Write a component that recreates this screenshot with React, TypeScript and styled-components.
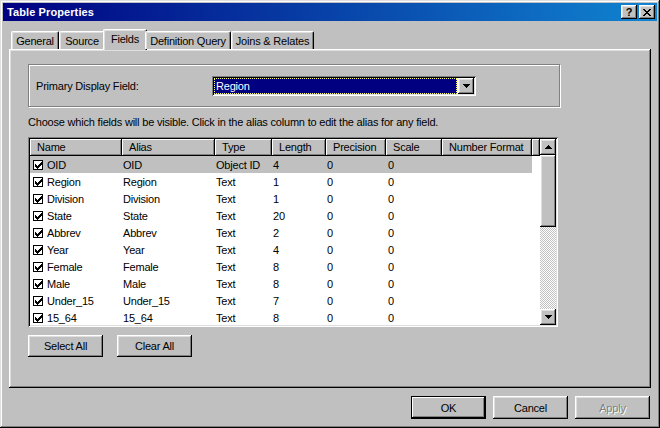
import React from "react";
import styled, { createGlobalStyle, css } from "styled-components";

const Global = createGlobalStyle`
  html, body { margin: 0; padding: 0; background: #c0c0c0; }
  body {
    font-family: "Liberation Sans", Arial, sans-serif;
    font-size: 11px;
    letter-spacing: -0.2px;
    color: #000;
  }
  * { box-sizing: border-box; }
`;

const raised = css`
  box-shadow: inset -1px -1px #000, inset 1px 1px #fff, inset -2px -2px #808080,
    inset 2px 2px #dfdfdf;
`;

const sunken = css`
  box-shadow: inset 1px 1px #808080, inset -1px -1px #fff, inset 2px 2px #000,
    inset -2px -2px #dfdfdf;
`;

const Window = styled.div`
  width: 660px;
  height: 428px;
  background: #c0c0c0;
  padding: 3px;
  display: flex;
  flex-direction: column;
  box-shadow: inset -1px -1px #000, inset 1px 1px #dfdfdf, inset -2px -2px #808080,
    inset 2px 2px #fff;
`;

const TitleBar = styled.div`
  height: 18px;
  flex: none;
  display: flex;
  align-items: center;
  padding: 0 2px 0 4px;
  background: linear-gradient(to right, #000080, #1084d0);
`;

const Title = styled.div`
  flex: 1;
  color: #fff;
  font-weight: bold;
  font-size: 11px;
  letter-spacing: 0.1px;
`;

const CaptionButton = styled.div`
  width: 16px;
  height: 14px;
  background: #c0c0c0;
  ${raised};
  display: flex;
  align-items: center;
  justify-content: center;
  font-weight: bold;
  font-size: 11px;
  line-height: 14px;
  letter-spacing: 0;
  & + & {
    margin-left: 2px;
  }
`;

const Body = styled.div`
  flex: 1;
  display: flex;
  flex-direction: column;
  padding: 8px 6px 6px 6px;
`;

const TabRow = styled.div`
  height: 20px;
  flex: none;
  display: flex;
  align-items: flex-end;
  padding-left: 2px;
  position: relative;
  z-index: 1;
`;

const Tab = styled.div<{ $active?: boolean; $w: number }>`
  width: ${(p) => p.$w}px;
  height: ${(p) => (p.$active ? 21 : 18)}px;
  margin-bottom: ${(p) => (p.$active ? -1 : 0)}px;
  margin-left: ${(p) => (p.$active ? -2 : 0)}px;
  margin-right: ${(p) => (p.$active ? -2 : 0)}px;
  background: #c0c0c0;
  border-top: 1px solid #fff;
  border-left: 1px solid #fff;
  border-right: 1px solid #000;
  border-radius: 2px 2px 0 0;
  box-shadow: inset -1px 0 #808080, inset 1px 1px #dfdfdf;
  display: flex;
  justify-content: center;
  padding-top: 3px;
  white-space: nowrap;
`;

const Panel = styled.div`
  flex: 1;
  ${raised};
  padding: 15px 19px 0 19px;
  display: flex;
  flex-direction: column;
`;

const GroupBox = styled.div`
  width: 532px;
  height: 43px;
  border: 1px solid #808080;
  box-shadow: inset 1px 1px #fff, 1px 1px #fff;
  display: grid;
  grid-template-columns: 176px 264px;
  align-items: center;
  padding: 1px 0 0 7px;
`;

const Combo = styled.div`
  height: 20px;
  ${sunken};
  background: #fff;
  padding: 2px;
  display: flex;
`;

const ComboValue = styled.div`
  flex: 1;
  background: #000080;
  color: #fff;
  outline: 1px dotted #ffff80;
  outline-offset: -1px;
  padding-left: 2px;
  line-height: 16px;
  margin-right: 1px;
`;

const ComboButton = styled.div`
  width: 16px;
  height: 16px;
  background: #c0c0c0;
  ${raised};
  display: flex;
  align-items: center;
  justify-content: center;
`;

const Hint = styled.div`
  margin-top: 8px;
  height: 14px;
  line-height: 14px;
  white-space: nowrap;
`;

const TableFrame = styled.div`
  margin-top: 8px;
  width: 530px;
  height: 190px;
  ${sunken};
  padding: 2px;
  display: flex;
  background: #fff;
`;

const ListArea = styled.div`
  width: 510px;
  height: 186px;
  overflow: hidden;
  background: #fff;
`;

const COLS = "92px 93px 57px 54px 60px 56px 90px 8px";

const HeaderRow = styled.div`
  display: grid;
  grid-template-columns: ${COLS};
  height: 17px;
`;

const HeaderCell = styled.div`
  background: #c0c0c0;
  box-shadow: inset -1px -1px #000, inset 1px 1px #fff, inset -2px -2px #808080;
  padding-left: 7px;
  line-height: 16px;
  white-space: nowrap;
  overflow: hidden;
`;

const Row = styled.div<{ $selected?: boolean }>`
  display: grid;
  grid-template-columns: ${COLS};
  height: 17px;
  line-height: 18px;
  & > div:not(:last-child) {
    background: ${(p) => (p.$selected ? "#c0c0c0" : "#fff")};
  }
`;

const Cell = styled.div<{ $pad?: number }>`
  padding-left: ${(p) => p.$pad ?? 1}px;
  white-space: nowrap;
  overflow: hidden;
`;

const NameCell = styled.div`
  display: flex;
  align-items: center;
  gap: 4px;
  padding-left: 3px;
  white-space: nowrap;
`;

const CheckBox = styled.div`
  width: 10px;
  height: 10px;
  border: 1px solid #000;
  background: #fff;
  flex: none;
  display: flex;
`;

const ScrollBar = styled.div`
  width: 16px;
  height: 186px;
  display: flex;
  flex-direction: column;
`;

const ScrollButton = styled.div`
  width: 16px;
  height: 16px;
  flex: none;
  background: #c0c0c0;
  ${raised};
  display: flex;
  align-items: center;
  justify-content: center;
`;

const Thumb = styled.div`
  height: 72px;
  flex: none;
  background: #c0c0c0;
  ${raised};
`;

const Track = styled.div`
  flex: 1;
  background-image: repeating-conic-gradient(#c0c0c0 0% 25%, #fff 0% 50%);
  background-size: 2px 2px;
`;

const ButtonRow = styled.div<{ $end?: boolean }>`
  display: flex;
  gap: ${(p) => (p.$end ? 7 : 14)}px;
  justify-content: ${(p) => (p.$end ? "flex-end" : "flex-start")};
  margin-top: 8px;
  padding-right: ${(p) => (p.$end ? 1 : 0)}px;
`;

const Button = styled.div<{ $default?: boolean; $disabled?: boolean; $h?: number }>`
  width: 75px;
  height: ${(p) => p.$h ?? 23}px;
  background: #c0c0c0;
  display: flex;
  align-items: center;
  justify-content: center;
  ${(p) =>
    p.$default
      ? css`
          border: 1px solid #000;
          box-shadow: inset -1px -1px #000, inset 1px 1px #fff, inset -2px -2px #808080;
        `
      : raised};
  ${(p) =>
    p.$disabled &&
    css`
      color: #808080;
      text-shadow: 1px 1px #fff;
    `}
`;

const CHECK = [
  [6, 0], [5, 1], [6, 1], [0, 2], [4, 2], [5, 2], [6, 2],
  [0, 3], [1, 3], [3, 3], [4, 3], [5, 3],
  [0, 4], [1, 4], [2, 4], [3, 4], [4, 4],
  [1, 5], [2, 5], [3, 5], [2, 6],
];

const CheckMark = () => (
  <svg width="8" height="8" viewBox="0 0 8 8" shapeRendering="crispEdges">
    {CHECK.map(([x, y]) => (
      <rect key={`${x}-${y}`} x={x + 1} y={y + 1} width="1" height="1" fill="#000" />
    ))}
  </svg>
);

const ArrowIcon = ({ down }: { down?: boolean }) => (
  <svg width="7" height="4" viewBox="0 0 7 4" shapeRendering="crispEdges">
    {down ? (
      <path d="M0 0h7v1H0zM1 1h5v1H1zM2 2h3v1H2zM3 3h1v1H3z" fill="#000" />
    ) : (
      <path d="M3 0h1v1H3zM2 1h3v1H2zM1 2h5v1H1zM0 3h7v1H0z" fill="#000" />
    )}
  </svg>
);

const CloseIcon = () => (
  <svg width="8" height="7" viewBox="0 0 8 7" shapeRendering="crispEdges">
    <path
      d="M0 0h2v1H0zM6 0h2v1H6zM1 1h2v1H1zM5 1h2v1H5zM2 2h4v1H2zM3 3h2v1H3zM2 4h4v1H2zM1 5h2v1H1zM5 5h2v1H5zM0 6h2v1H0zM6 6h2v1H6z"
      fill="#000"
    />
  </svg>
);

const tabs = [
  { label: "General", w: 48 },
  { label: "Source", w: 46 },
  { label: "Fields", w: 44, active: true },
  { label: "Definition Query", w: 86 },
  { label: "Joins & Relates", w: 83 },
];

const fields: [string, string, string, string][] = [
  ["OID", "Object ID", "4", "0"],
  ["Region", "Text", "1", "0"],
  ["Division", "Text", "1", "0"],
  ["State", "Text", "20", "0"],
  ["Abbrev", "Text", "2", "0"],
  ["Year", "Text", "4", "0"],
  ["Female", "Text", "8", "0"],
  ["Male", "Text", "8", "0"],
  ["Under_15", "Text", "7", "0"],
  ["15_64", "Text", "8", "0"],
];

const headers = ["Name", "Alias", "Type", "Length", "Precision", "Scale", "Number Format", ""];

export default function App() {
  return (
    <>
      <Global />
      <Window>
        <TitleBar>
          <Title>Table Properties</Title>
          <CaptionButton>?</CaptionButton>
          <CaptionButton>
            <CloseIcon />
          </CaptionButton>
        </TitleBar>
        <Body>
          <TabRow>
            {tabs.map((t) => (
              <Tab key={t.label} $w={t.w} $active={t.active}>
                {t.label}
              </Tab>
            ))}
          </TabRow>
          <Panel>
            <GroupBox>
              <span>Primary Display Field:</span>
              <Combo>
                <ComboValue>Region</ComboValue>
                <ComboButton>
                  <ArrowIcon down />
                </ComboButton>
              </Combo>
            </GroupBox>
            <Hint>
              Choose which fields will be visible. Click in the alias column to edit the alias for any field.
            </Hint>
            <TableFrame>
              <ListArea>
                <HeaderRow>
                  {headers.map((h, i) => (
                    <HeaderCell key={i}>{h}</HeaderCell>
                  ))}
                </HeaderRow>
                {fields.map(([name, type, len, prec], i) => (
                  <Row key={name} $selected={i === 0}>
                    <NameCell>
                      <CheckBox>
                        <CheckMark />
                      </CheckBox>
                      {name}
                    </NameCell>
                    <Cell>{name}</Cell>
                    <Cell>{type}</Cell>
                    <Cell>{len}</Cell>
                    <Cell>{prec}</Cell>
                    <Cell $pad={2}>0</Cell>
                    <Cell />
                    <Cell />
                  </Row>
                ))}
              </ListArea>
              <ScrollBar>
                <ScrollButton>
                  <ArrowIcon />
                </ScrollButton>
                <Thumb />
                <Track />
                <ScrollButton>
                  <ArrowIcon down />
                </ScrollButton>
              </ScrollBar>
            </TableFrame>
            <ButtonRow>
              <Button $h={22}>Select All</Button>
              <Button $h={22}>Clear All</Button>
            </ButtonRow>
          </Panel>
          <ButtonRow $end>
            <Button $default>OK</Button>
            <Button>Cancel</Button>
            <Button $disabled>Apply</Button>
          </ButtonRow>
        </Body>
      </Window>
    </>
  );
}
